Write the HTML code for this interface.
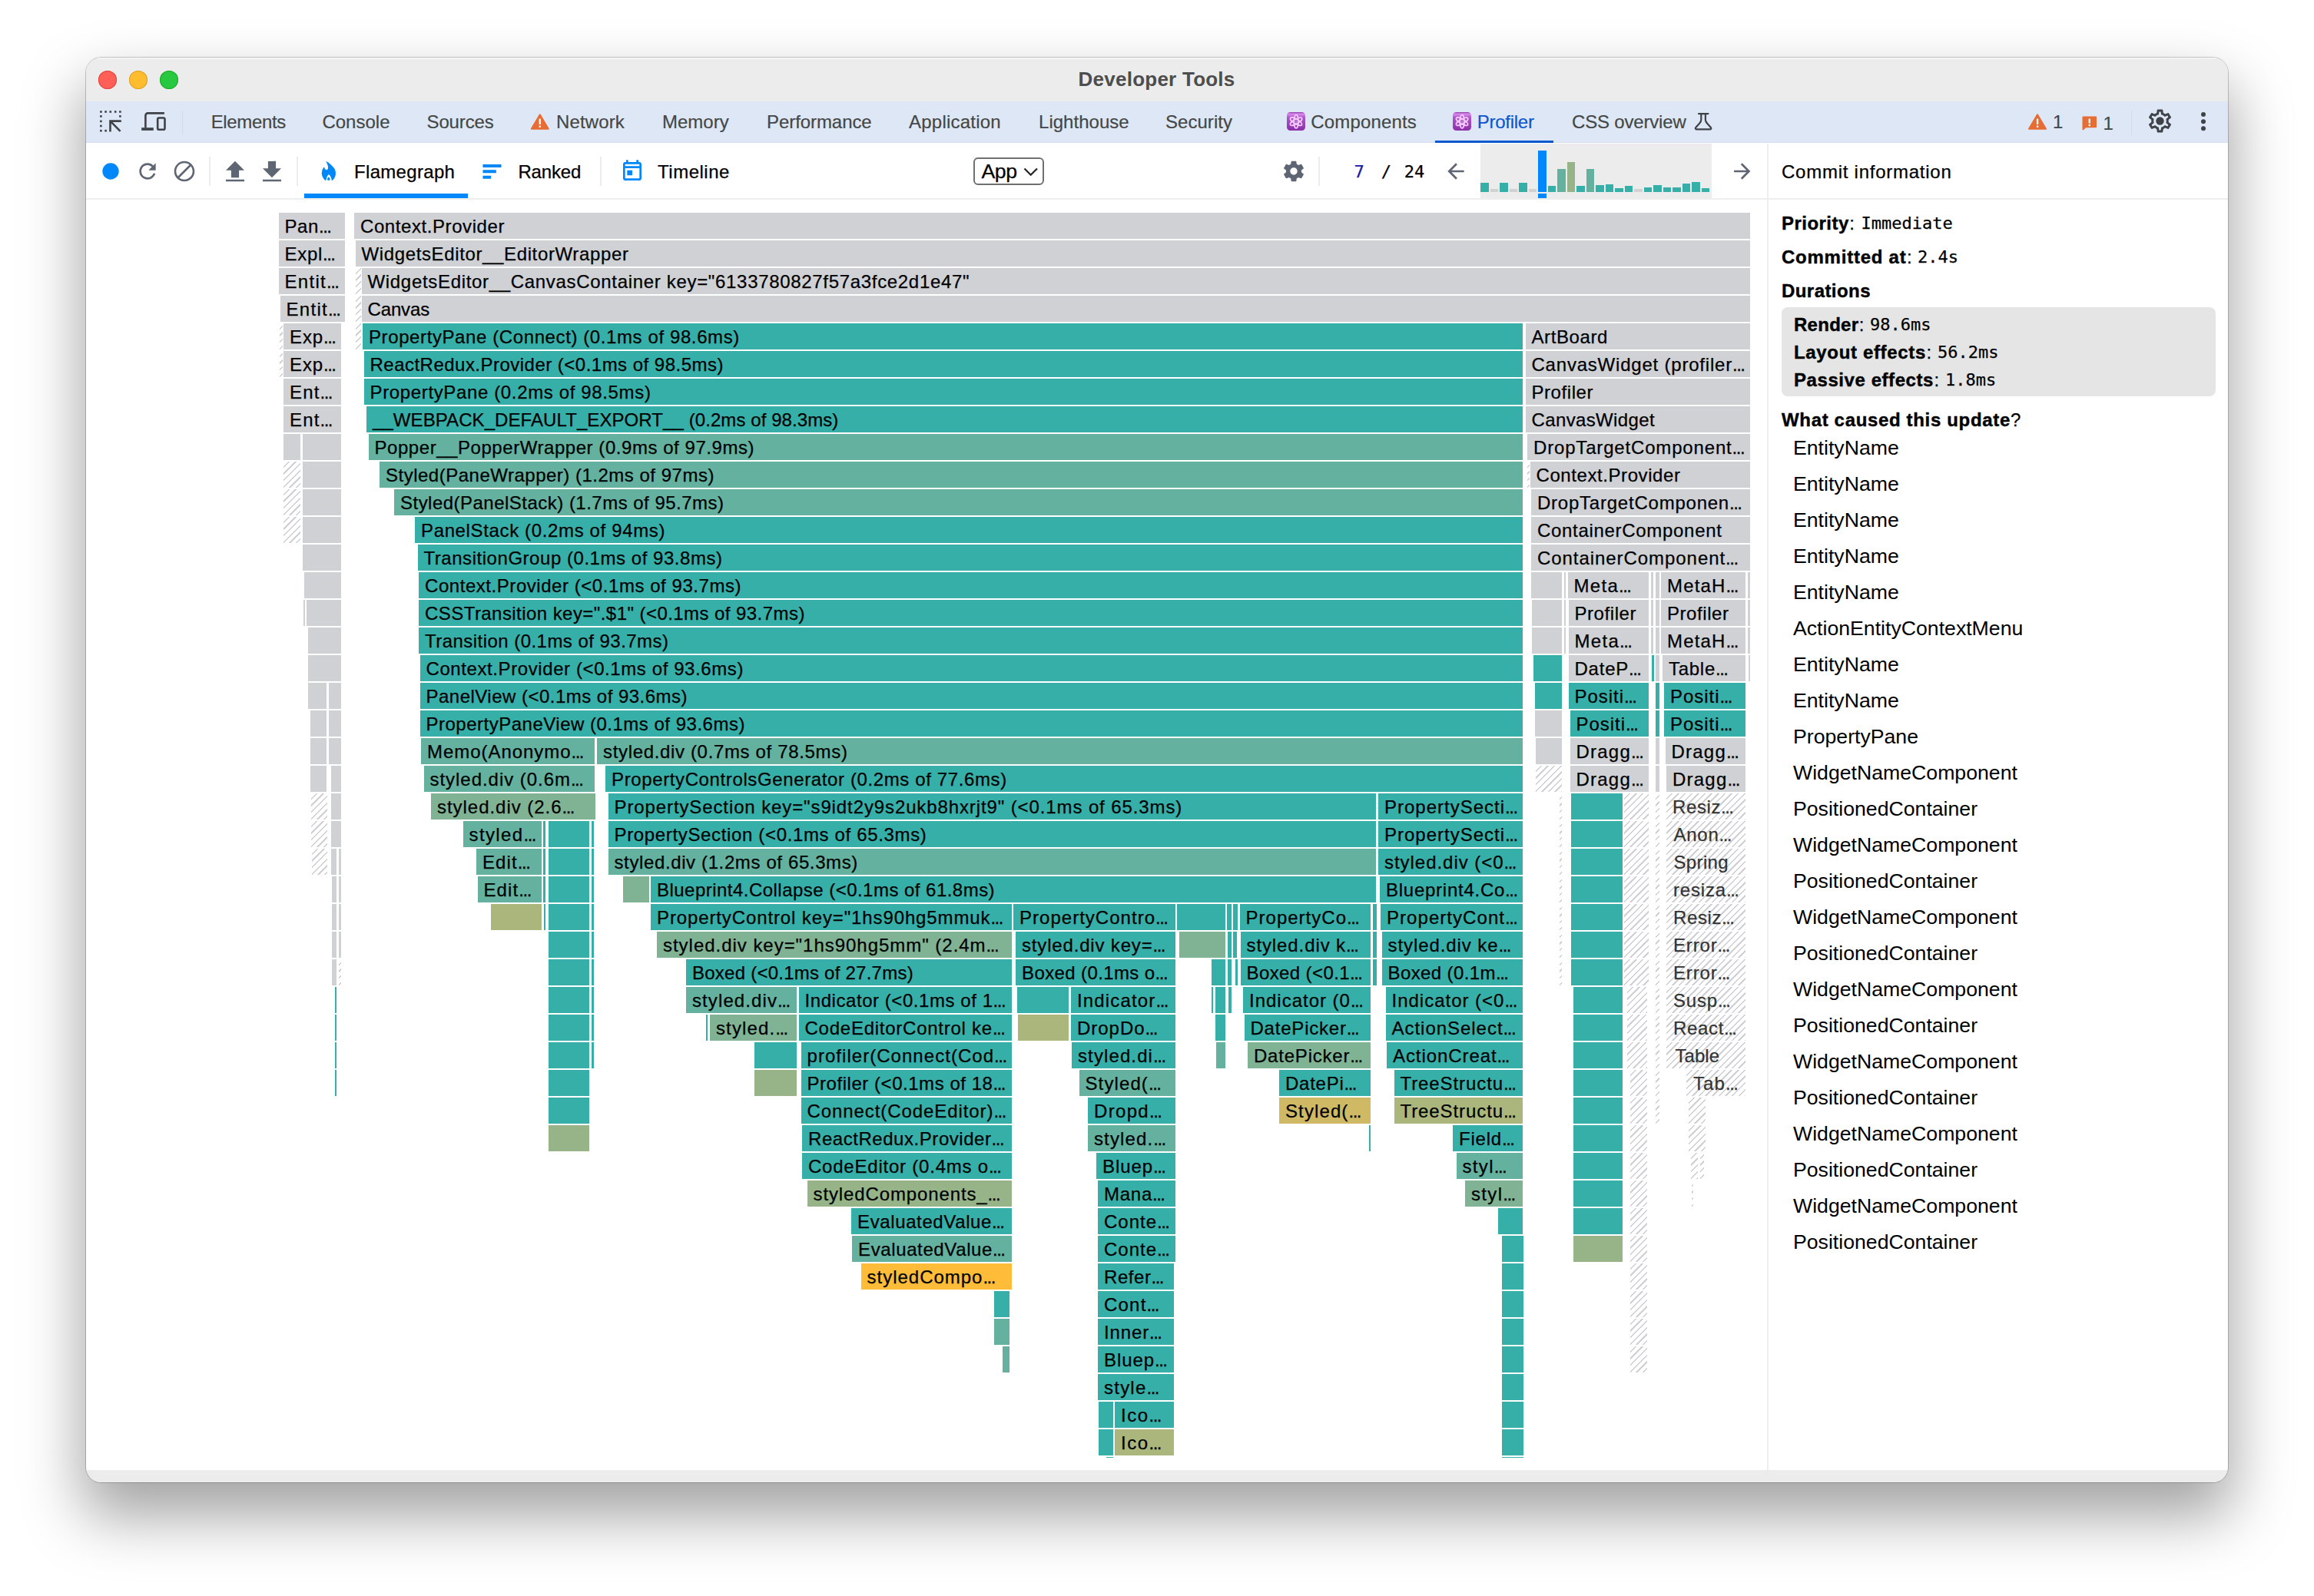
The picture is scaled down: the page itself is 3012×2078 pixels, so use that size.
<!DOCTYPE html>
<html><head><meta charset="utf-8"><title>Developer Tools</title>
<style>*{box-sizing:border-box;margin:0;padding:0}
html,body{width:3012px;height:2078px;background:#fff;overflow:hidden}
body{position:relative;font-family:"Liberation Sans",sans-serif;color:#000}
#win{position:absolute;left:112px;top:75px;width:2788px;height:1855px;border-radius:20px;background:#fff;
 box-shadow:0 0 0 1px rgba(0,0,0,.2),0 40px 78px 4.5px rgba(0,0,0,.36)}
#clip{position:absolute;left:0;top:0;width:2788px;height:1855px;border-radius:20px;overflow:hidden}
#c{position:absolute;left:-112px;top:-75px;width:3012px;height:2078px}
#c div,#c svg{position:absolute}
.title{left:112px;top:75px;width:2788px;height:57px;background:#ececec;box-shadow:inset 0 1.5px 0 rgba(255,255,255,.6)}
.ttl{font:bold 26px/30px "Liberation Sans",sans-serif;color:#4d4d4d;white-space:pre}
.tabs{left:112px;top:132px;width:2788px;height:54px;background:#dee7f6}
.tl{border-radius:50%;width:24px;height:24px;top:91.5px}
.tab{font-size:24px;line-height:30px;color:#444746;white-space:pre}
.sel{color:#0b57d0}
.tt{font-size:24px;line-height:31.4px;color:#000;white-space:pre}
.fg{left:0;top:0;width:3012px;height:1898px;overflow:hidden}
.b{height:34px;font-size:24px;line-height:35px;letter-spacing:0.6px;white-space:pre;overflow:hidden;color:#000;-webkit-text-stroke:0.25px}
.t{padding-left:8px}
.b i{font-style:normal;letter-spacing:-1.5px}
.g{background:#cfd1d5}
.h{background:repeating-linear-gradient(135deg,rgba(0,0,0,0) 0 4.4px,#cfd1d5 4.4px 6.1px);color:#333}
.sep{width:2px;background:#ececec}
.rp{white-space:pre;font-size:24px;line-height:30px}
.bd{font-weight:bold}
.m{font-family:"DejaVu Sans Mono","Liberation Mono",monospace;font-size:22px;white-space:pre}
.li{left:2334px;font-size:26.67px;line-height:32px;white-space:pre}
.tt,.rp,.m{-webkit-text-stroke:0.25px}
.bd{-webkit-text-stroke:0.4px}
.atom{width:24px;height:24px;border-radius:4.6px;background:linear-gradient(180deg,#8d3aa6 0,#d88bee 10%,#ab55c9 30%,#8c2fa9 100%)}
.tab{-webkit-text-stroke:0.2px}
</style></head>
<body>
<div id="win"><div id="clip"><div id="c">
<div class="title"></div>
<div class="tl" style="left:128px;background:#fe5f57;box-shadow:inset 0 0 0 1px #e0443e"></div>
<div class="tl" style="left:168px;background:#febc2e;box-shadow:inset 0 0 0 1px #dea123"></div>
<div class="tl" style="left:208px;background:#28c840;box-shadow:inset 0 0 0 1px #1aab29"></div>
<div class="ttl" style="left:1403.6px;top:88px;letter-spacing:0.24px">Developer Tools</div>
<div class="tabs"></div>
<div class="tab" style="left:274.7px;top:143.5px;letter-spacing:-0.34px">Elements</div>
<div class="tab" style="left:419.4px;top:143.5px;letter-spacing:0.02px">Console</div>
<div class="tab" style="left:555.5px;top:143.5px;letter-spacing:-0.12px">Sources</div>
<div class="tab" style="left:724px;top:143.5px;letter-spacing:0.14px">Network</div>
<div class="tab" style="left:861.9px;top:143.5px;letter-spacing:0.02px">Memory</div>
<div class="tab" style="left:998px;top:143.5px;letter-spacing:-0.07px">Performance</div>
<div class="tab" style="left:1183px;top:143.5px;letter-spacing:0.23px">Application</div>
<div class="tab" style="left:1352px;top:143.5px;letter-spacing:0.03px">Lighthouse</div>
<div class="tab" style="left:1517px;top:143.5px;letter-spacing:0.04px">Security</div>
<div class="tab" style="left:1706.3px;top:143.5px;letter-spacing:0.16px">Components</div>
<div class="tab sel" style="left:1922.8px;top:143.5px;letter-spacing:-0.27px">Profiler</div>
<div class="tab" style="left:2046px;top:143.5px;letter-spacing:-0.18px">CSS overview</div>
<div class="tab" style="left:2672px;top:144.3px">1</div><div class="tab" style="left:2737.5px;top:146.2px">1</div>
<div style="left:236.5px;top:144px;width:1px;height:32px;background:#d2dbec"></div>
<div style="left:2774px;top:144px;width:1px;height:32px;background:#d2dbec"></div>
<div style="left:112px;top:184.5px;width:2788px;height:1.5px;background:#d8dff1"></div>
<div style="left:1868px;top:182.5px;width:154px;height:3.5px;background:#0b57d0"></div>
<div style="left:112px;top:257.5px;width:2788px;height:2px;background:#eeeeee"></div>
<div class="sep" style="left:272px;top:203.5px;height:38px"></div>
<div class="sep" style="left:386px;top:203.5px;height:38px"></div>
<div class="sep" style="left:781px;top:203.5px;height:38px"></div>
<div class="sep" style="left:1716px;top:203.5px;height:38px"></div>
<div class="tt" style="left:461px;top:208px;letter-spacing:0.32px">Flamegraph</div>
<div class="tt" style="left:674.4px;top:208px;letter-spacing:-0.14px">Ranked</div>
<div class="tt" style="left:856px;top:208px;letter-spacing:0.52px">Timeline</div>
<div style="left:396px;top:252px;width:213px;height:6px;background:#0088fa"></div>
<div style="left:1267px;top:204.5px;width:91.5px;height:36.5px;border:2px solid #707070;border-radius:6px;background:#fff"></div>
<div class="tt" style="left:1277.5px;top:207.6px;font-size:26.67px;letter-spacing:-0.48px">App</div>
<div class="m" style="left:1762.5px;top:209px;color:#1a1aa6;line-height:30px">7</div><div class="m" style="left:1797.7px;top:209px;line-height:30px">/</div><div class="m" style="left:1827.7px;top:209px;line-height:30px">24</div>
<div style="left:1927px;top:187px;width:300.5px;height:72px;background:#ececec"></div>
<div style="left:1927.2px;top:238.2px;width:10.8px;height:11.8px;background:#37afa9"></div><div style="left:1939.7px;top:246.4px;width:10.8px;height:3.6px;background:#d1d1d1"></div><div style="left:1952.2px;top:238.2px;width:10.8px;height:11.8px;background:#37afa9"></div><div style="left:1964.7px;top:246.4px;width:10.8px;height:3.6px;background:#d1d1d1"></div><div style="left:1977.2px;top:238.2px;width:10.8px;height:11.8px;background:#37afa9"></div><div style="left:1989.7px;top:246.4px;width:10.8px;height:3.6px;background:#d1d1d1"></div><div style="left:2002.2px;top:196.0px;width:10.8px;height:54px;background:#0088fa"></div><div style="left:2014.7px;top:242.2px;width:10.8px;height:7.8px;background:#37afa9"></div><div style="left:2027.2px;top:220.4px;width:10.8px;height:29.6px;background:#63b19e"></div><div style="left:2039.7px;top:211.3px;width:10.8px;height:38.7px;background:#97b488"></div><div style="left:2052.2px;top:242.2px;width:10.8px;height:7.8px;background:#37afa9"></div><div style="left:2064.7px;top:220.4px;width:10.8px;height:29.6px;background:#63b19e"></div><div style="left:2077.2px;top:241.3px;width:10.8px;height:8.7px;background:#37afa9"></div><div style="left:2089.7px;top:240.0px;width:10.8px;height:10px;background:#37afa9"></div><div style="left:2102.2px;top:245.1px;width:10.8px;height:4.9px;background:#37afa9"></div><div style="left:2114.7px;top:242.2px;width:10.8px;height:7.8px;background:#37afa9"></div><div style="left:2127.2px;top:246.4px;width:10.8px;height:3.6px;background:#d1d1d1"></div><div style="left:2139.7px;top:244.0px;width:10.8px;height:6px;background:#37afa9"></div><div style="left:2152.2px;top:241.3px;width:10.8px;height:8.7px;background:#37afa9"></div><div style="left:2164.7px;top:244.0px;width:10.8px;height:6px;background:#37afa9"></div><div style="left:2177.2px;top:244.0px;width:10.8px;height:6px;background:#37afa9"></div><div style="left:2189.7px;top:239.1px;width:10.8px;height:10.9px;background:#37afa9"></div><div style="left:2202.2px;top:237.3px;width:10.8px;height:12.7px;background:#37afa9"></div><div style="left:2214.7px;top:245.1px;width:10.8px;height:4.9px;background:#37afa9"></div><div style="left:2002.2px;top:252.2px;width:10.8px;height:5.6px;background:#0088fa"></div>
<div class="fg">
<div class="b g t" style="left:362.5px;top:277px;width:86.5px;letter-spacing:0.60px;">Pan<i>...</i></div><div class="b g t" style="left:461px;top:277px;width:1817px;letter-spacing:0.58px;">Context.Provider</div>
<div class="b g t" style="left:362.5px;top:313px;width:86.5px;letter-spacing:0.70px;">Expl<i>...</i></div><div class="b g t" style="left:462.5px;top:313px;width:1815.5px;letter-spacing:0.63px;">WidgetsEditor__EditorWrapper</div>
<div class="b g t" style="left:362.5px;top:349px;width:86.5px;letter-spacing:1.29px;">Entit<i>...</i></div><div class="b h" style="left:463px;top:349px;width:6.5px;"></div><div class="b g t" style="left:470.5px;top:349px;width:1807.5px;letter-spacing:0.68px;">WidgetsEditor__CanvasContainer key="6133780827f57a3fce2d1e47"</div>
<div class="b g t" style="left:364.5px;top:385px;width:84.5px;letter-spacing:1.29px;">Entit<i>...</i></div><div class="b h" style="left:463px;top:385px;width:6.5px;"></div><div class="b g t" style="left:470.5px;top:385px;width:1807.5px;letter-spacing:-0.15px;">Canvas</div>
<div class="b h" style="left:364px;top:421px;width:3.5px;"></div><div class="b g t" style="left:369px;top:421px;width:75px;letter-spacing:0.88px;">Exp<i>...</i></div><div class="b h" style="left:463px;top:421px;width:6.5px;"></div><div class="b t" style="left:472px;top:421px;width:1510px;background:#37afa9;letter-spacing:0.60px;">PropertyPane (Connect) (0.1ms of 98.6ms)</div><div class="b g t" style="left:1985.5px;top:421px;width:292.5px;letter-spacing:0.60px;">ArtBoard</div>
<div class="b h" style="left:364px;top:457px;width:3.5px;"></div><div class="b g t" style="left:369px;top:457px;width:75px;letter-spacing:0.88px;">Exp<i>...</i></div><div class="b t" style="left:473.5px;top:457px;width:1508.5px;background:#37afa9;letter-spacing:0.48px;">ReactRedux.Provider (&lt;0.1ms of 98.5ms)</div><div class="b g t" style="left:1985.5px;top:457px;width:292.5px;letter-spacing:0.79px;">CanvasWidget (profiler<i>...</i></div>
<div class="b g t" style="left:369px;top:493px;width:75px;letter-spacing:1.16px;">Ent<i>...</i></div><div class="b t" style="left:473.5px;top:493px;width:1508.5px;background:#37afa9;letter-spacing:0.64px;">PropertyPane (0.2ms of 98.5ms)</div><div class="b g t" style="left:1985.5px;top:493px;width:292.5px;letter-spacing:0.56px;">Profiler</div>
<div class="b g t" style="left:369px;top:529px;width:75px;letter-spacing:1.16px;">Ent<i>...</i></div><div class="b t" style="left:477px;top:529px;width:1505px;background:#37afa9;letter-spacing:0.08px;">__WEBPACK_DEFAULT_EXPORT__ (0.2ms of 98.3ms)</div><div class="b g t" style="left:1985.5px;top:529px;width:292.5px;letter-spacing:0.37px;">CanvasWidget</div>
<div class="b g" style="left:369px;top:565px;width:22px;"></div><div class="b g" style="left:394px;top:565px;width:50px;"></div><div class="b t" style="left:479.5px;top:565px;width:1502.5px;background:#63b19e;letter-spacing:0.55px;">Popper__PopperWrapper (0.9ms of 97.9ms)</div><div class="b g t" style="left:1988px;top:565px;width:290px;letter-spacing:0.83px;">DropTargetComponent<i>...</i></div>
<div class="b h" style="left:369px;top:601px;width:22px;"></div><div class="b g" style="left:394px;top:601px;width:50px;"></div><div class="b t" style="left:494px;top:601px;width:1488px;background:#63b19e;letter-spacing:0.50px;">Styled(PaneWrapper) (1.2ms of 97ms)</div><div class="b h" style="left:1988px;top:601px;width:2.5px;"></div><div class="b g t" style="left:1991.5px;top:601px;width:286.5px;letter-spacing:0.58px;">Context.Provider</div>
<div class="b h" style="left:369px;top:637px;width:22px;"></div><div class="b g" style="left:394px;top:637px;width:50px;"></div><div class="b t" style="left:513px;top:637px;width:1469px;background:#63b19e;letter-spacing:0.48px;">Styled(PanelStack) (1.7ms of 95.7ms)</div><div class="b g t" style="left:1993px;top:637px;width:285px;letter-spacing:0.77px;">DropTargetComponen<i>...</i></div>
<div class="b h" style="left:369px;top:673px;width:22px;"></div><div class="b g" style="left:394px;top:673px;width:50px;"></div><div class="b t" style="left:540px;top:673px;width:1442px;background:#37afa9;letter-spacing:0.64px;">PanelStack (0.2ms of 94ms)</div><div class="b g t" style="left:1993px;top:673px;width:285px;letter-spacing:0.69px;">ContainerComponent</div>
<div class="b g" style="left:394px;top:709px;width:50px;"></div><div class="b t" style="left:543.5px;top:709px;width:1438.5px;background:#37afa9;letter-spacing:0.54px;">TransitionGroup (0.1ms of 93.8ms)</div><div class="b g t" style="left:1993px;top:709px;width:285px;letter-spacing:0.94px;">ContainerComponent<i>...</i></div>
<div class="b g" style="left:396px;top:745px;width:48px;"></div><div class="b t" style="left:545px;top:745px;width:1437px;background:#37afa9;letter-spacing:0.55px;">Context.Provider (&lt;0.1ms of 93.7ms)</div><div class="b g" style="left:1993px;top:745px;width:40px;"></div><div class="b g" style="left:2036px;top:745px;width:2px;"></div><div class="b g t" style="left:2040.5px;top:745px;width:105.5px;letter-spacing:1.29px;">Meta<i>...</i></div><div class="b g" style="left:2149px;top:745px;width:2.5px;"></div><div class="b g" style="left:2155px;top:745px;width:5px;"></div><div class="b g t" style="left:2162px;top:745px;width:110px;letter-spacing:1.16px;">MetaH<i>...</i></div><div class="b g" style="left:2274.5px;top:745px;width:3.5px;"></div>
<div class="b g" style="left:395px;top:781px;width:2px;"></div><div class="b g" style="left:399px;top:781px;width:45px;"></div><div class="b t" style="left:545px;top:781px;width:1437px;background:#37afa9;letter-spacing:0.44px;">CSSTransition key=".$1" (&lt;0.1ms of 93.7ms)</div><div class="b g" style="left:1994px;top:781px;width:39px;"></div><div class="b g" style="left:2036px;top:781px;width:2px;"></div><div class="b g t" style="left:2041.5px;top:781px;width:104.5px;letter-spacing:0.56px;">Profiler</div><div class="b g" style="left:2149px;top:781px;width:2.5px;"></div><div class="b g" style="left:2155px;top:781px;width:5px;"></div><div class="b g t" style="left:2162px;top:781px;width:110px;letter-spacing:0.56px;">Profiler</div><div class="b g" style="left:2275px;top:781px;width:3px;"></div>
<div class="b g" style="left:401px;top:817px;width:43px;"></div><div class="b t" style="left:545px;top:817px;width:1437px;background:#37afa9;letter-spacing:0.46px;">Transition (0.1ms of 93.7ms)</div><div class="b g" style="left:1994px;top:817px;width:39px;"></div><div class="b g" style="left:2036px;top:817px;width:2px;"></div><div class="b g t" style="left:2041.5px;top:817px;width:104.5px;letter-spacing:1.29px;">Meta<i>...</i></div><div class="b g" style="left:2149px;top:817px;width:2.5px;"></div><div class="b g" style="left:2155px;top:817px;width:5px;"></div><div class="b g t" style="left:2162px;top:817px;width:110px;letter-spacing:1.16px;">MetaH<i>...</i></div><div class="b g" style="left:2275px;top:817px;width:3px;"></div>
<div class="b g" style="left:401px;top:853px;width:43px;"></div><div class="b t" style="left:546.5px;top:853px;width:1435.5px;background:#37afa9;letter-spacing:0.59px;">Context.Provider (&lt;0.1ms of 93.6ms)</div><div class="b" style="left:1996px;top:853px;width:37px;background:#37afa9;"></div><div class="b g t" style="left:2041.5px;top:853px;width:104.5px;letter-spacing:0.76px;">DateP<i>...</i></div><div class="b" style="left:2150px;top:853px;width:2.5px;background:#37afa9;"></div><div class="b g" style="left:2155px;top:853px;width:5px;"></div><div class="b g t" style="left:2164px;top:853px;width:108px;letter-spacing:0.72px;">Table<i>...</i></div><div class="b g" style="left:2276px;top:853px;width:2px;"></div>
<div class="b g" style="left:401px;top:889px;width:24px;"></div><div class="b g" style="left:428px;top:889px;width:16px;"></div><div class="b t" style="left:546.5px;top:889px;width:1435.5px;background:#37afa9;letter-spacing:0.48px;">PanelView (&lt;0.1ms of 93.6ms)</div><div class="b" style="left:1997.5px;top:889px;width:35.5px;background:#37afa9;"></div><div class="b t" style="left:2041.5px;top:889px;width:104.5px;background:#37afa9;letter-spacing:0.97px;">Positi<i>...</i></div><div class="b" style="left:2155px;top:889px;width:5px;background:#37afa9;"></div><div class="b t" style="left:2166px;top:889px;width:106px;background:#37afa9;letter-spacing:0.97px;">Positi<i>...</i></div>
<div class="b g" style="left:404px;top:925px;width:21px;"></div><div class="b g" style="left:428px;top:925px;width:16px;"></div><div class="b t" style="left:546.5px;top:925px;width:1435.5px;background:#37afa9;letter-spacing:0.50px;">PropertyPaneView (0.1ms of 93.6ms)</div><div class="b g" style="left:1997.5px;top:925px;width:35.5px;"></div><div class="b t" style="left:2043.5px;top:925px;width:102.5px;background:#37afa9;letter-spacing:0.97px;">Positi<i>...</i></div><div class="b" style="left:2155px;top:925px;width:5px;background:#37afa9;"></div><div class="b t" style="left:2166px;top:925px;width:106px;background:#37afa9;letter-spacing:0.97px;">Positi<i>...</i></div>
<div class="b g" style="left:404px;top:961px;width:21px;"></div><div class="b g" style="left:428px;top:961px;width:16px;"></div><div class="b t" style="left:548px;top:961px;width:226px;background:#63b19e;letter-spacing:0.95px;">Memo(Anonymo<i>...</i></div><div class="b t" style="left:777px;top:961px;width:1205px;background:#63b19e;letter-spacing:0.66px;">styled.div (0.7ms of 78.5ms)</div><div class="b g" style="left:1999px;top:961px;width:34px;"></div><div class="b g t" style="left:2043.5px;top:961px;width:102.5px;letter-spacing:1.23px;">Dragg<i>...</i></div><div class="b g" style="left:2155px;top:961px;width:5px;"></div><div class="b g t" style="left:2167.5px;top:961px;width:104.5px;letter-spacing:1.23px;">Dragg<i>...</i></div>
<div class="b g" style="left:404px;top:997px;width:21px;"></div><div class="b g" style="left:431px;top:997px;width:13px;"></div><div class="b t" style="left:551.5px;top:997px;width:222.5px;background:#63b19e;letter-spacing:0.96px;">styled.div (0.6m<i>...</i></div><div class="b t" style="left:788px;top:997px;width:1194px;background:#37afa9;letter-spacing:0.62px;">PropertyControlsGenerator (0.2ms of 77.6ms)</div><div class="b h" style="left:1999px;top:997px;width:34px;"></div><div class="b g t" style="left:2043.5px;top:997px;width:102.5px;letter-spacing:1.23px;">Dragg<i>...</i></div><div class="b g" style="left:2155px;top:997px;width:5px;"></div><div class="b g t" style="left:2169px;top:997px;width:103px;letter-spacing:1.23px;">Dragg<i>...</i></div>
<div class="b h" style="left:405px;top:1033px;width:21px;"></div><div class="b g" style="left:431px;top:1033px;width:13px;"></div><div class="b t" style="left:561px;top:1033px;width:214px;background:#80b393;letter-spacing:0.96px;">styled.div (2.6<i>...</i></div><div class="b t" style="left:791.5px;top:1033px;width:999.5px;background:#37afa9;letter-spacing:0.89px;">PropertySection key="s9idt2y9s2ukb8hxrjt9" (&lt;0.1ms of 65.3ms)</div><div class="b t" style="left:1794px;top:1033px;width:188px;background:#37afa9;letter-spacing:1.00px;">PropertySecti<i>...</i></div><div class="b h" style="left:2030px;top:1033px;width:3px;"></div><div class="b" style="left:2045px;top:1033px;width:66.5px;background:#37afa9;"></div><div class="b h" style="left:2113.5px;top:1033px;width:32.5px;"></div><div class="b h" style="left:2155px;top:1033px;width:5px;"></div><div class="b h t" style="left:2169px;top:1033px;width:103px;letter-spacing:0.60px;">Resiz<i>...</i></div>
<div class="b h" style="left:405px;top:1069px;width:21px;"></div><div class="b g" style="left:431px;top:1069px;width:13px;"></div><div class="b t" style="left:602.5px;top:1069px;width:102.5px;background:#63b19e;letter-spacing:1.38px;">styled<i>...</i></div><div class="b" style="left:707px;top:1069px;width:2.5px;background:#37afa9;"></div><div class="b" style="left:714px;top:1069px;width:53px;background:#37afa9;"></div><div class="b" style="left:769.5px;top:1069px;width:3.5px;background:#37afa9;"></div><div class="b t" style="left:791.5px;top:1069px;width:999.5px;background:#37afa9;letter-spacing:0.65px;">PropertySection (&lt;0.1ms of 65.3ms)</div><div class="b t" style="left:1794px;top:1069px;width:188px;background:#37afa9;letter-spacing:1.00px;">PropertySecti<i>...</i></div><div class="b h" style="left:2030px;top:1069px;width:3px;"></div><div class="b" style="left:2045px;top:1069px;width:66.5px;background:#37afa9;"></div><div class="b h" style="left:2113.5px;top:1069px;width:32.5px;"></div><div class="b h" style="left:2155px;top:1069px;width:5px;"></div><div class="b h t" style="left:2169px;top:1069px;width:103px;padding-left:9.5px;letter-spacing:0.73px;">Anon<i>...</i></div>
<div class="b h" style="left:406px;top:1105px;width:20px;"></div><div class="b g" style="left:431px;top:1105px;width:7px;"></div><div class="b g" style="left:441px;top:1105px;width:3px;"></div><div class="b t" style="left:620px;top:1105px;width:85px;background:#63b19e;letter-spacing:1.11px;">Edit<i>...</i></div><div class="b" style="left:707px;top:1105px;width:2.5px;background:#37afa9;"></div><div class="b" style="left:714px;top:1105px;width:53px;background:#37afa9;"></div><div class="b" style="left:769.5px;top:1105px;width:3.5px;background:#37afa9;"></div><div class="b t" style="left:791.5px;top:1105px;width:999.5px;background:#63b19e;letter-spacing:0.62px;">styled.div (1.2ms of 65.3ms)</div><div class="b t" style="left:1794px;top:1105px;width:188px;background:#37afa9;letter-spacing:0.96px;">styled.div (&lt;0<i>...</i></div><div class="b h" style="left:2030px;top:1105px;width:3px;"></div><div class="b" style="left:2045px;top:1105px;width:66.5px;background:#37afa9;"></div><div class="b h" style="left:2113.5px;top:1105px;width:32.5px;"></div><div class="b h" style="left:2155px;top:1105px;width:5px;"></div><div class="b h t" style="left:2169px;top:1105px;width:103px;padding-left:9.5px;letter-spacing:0.35px;">Spring</div>
<div class="b g" style="left:432px;top:1141px;width:6px;"></div><div class="b g" style="left:441px;top:1141px;width:3px;"></div><div class="b t" style="left:621.5px;top:1141px;width:83.5px;background:#63b19e;letter-spacing:1.11px;">Edit<i>...</i></div><div class="b" style="left:707px;top:1141px;width:2.5px;background:#37afa9;"></div><div class="b" style="left:714px;top:1141px;width:53px;background:#37afa9;"></div><div class="b" style="left:769.5px;top:1141px;width:3.5px;background:#37afa9;"></div><div class="b" style="left:810.5px;top:1141px;width:34.5px;background:#80b393;"></div><div class="b t" style="left:847px;top:1141px;width:944px;background:#37afa9;letter-spacing:0.47px;">Blueprint4.Collapse (&lt;0.1ms of 61.8ms)</div><div class="b t" style="left:1796px;top:1141px;width:186px;background:#37afa9;letter-spacing:0.74px;">Blueprint4.Co<i>...</i></div><div class="b h" style="left:2030px;top:1141px;width:3px;"></div><div class="b" style="left:2045px;top:1141px;width:66.5px;background:#37afa9;"></div><div class="b h" style="left:2113.5px;top:1141px;width:32.5px;"></div><div class="b h" style="left:2155px;top:1141px;width:5px;"></div><div class="b h t" style="left:2169px;top:1141px;width:103px;padding-left:9px;letter-spacing:0.83px;">resiza<i>...</i></div>
<div class="b g" style="left:432px;top:1177px;width:6px;"></div><div class="b g" style="left:441px;top:1177px;width:3px;"></div><div class="b" style="left:639px;top:1177px;width:66px;background:#abb67d;"></div><div class="b" style="left:707.5px;top:1177px;width:2.5px;background:#37afa9;"></div><div class="b" style="left:714px;top:1177px;width:53px;background:#37afa9;"></div><div class="b" style="left:769.5px;top:1177px;width:3.5px;background:#37afa9;"></div><div class="b t" style="left:847px;top:1177px;width:469.5px;background:#37afa9;letter-spacing:0.88px;">PropertyControl key="1hs90hg5mmuk<i>...</i></div><div class="b t" style="left:1319px;top:1177px;width:210.5px;background:#37afa9;letter-spacing:1.02px;">PropertyContro<i>...</i></div><div class="b" style="left:1532px;top:1177px;width:62.5px;background:#37afa9;"></div><div class="b" style="left:1597px;top:1177px;width:5.5px;background:#37afa9;"></div><div class="b" style="left:1605px;top:1177px;width:6px;background:#37afa9;"></div><div class="b t" style="left:1613.5px;top:1177px;width:170.0px;background:#37afa9;letter-spacing:1.01px;">PropertyCo<i>...</i></div><div class="b" style="left:1786.5px;top:1177px;width:5.0px;background:#37afa9;"></div><div class="b t" style="left:1797px;top:1177px;width:185px;background:#37afa9;letter-spacing:1.05px;">PropertyCont<i>...</i></div><div class="b h" style="left:2030px;top:1177px;width:3px;"></div><div class="b" style="left:2045px;top:1177px;width:66.5px;background:#37afa9;"></div><div class="b h" style="left:2113.5px;top:1177px;width:32.5px;"></div><div class="b h" style="left:2155px;top:1177px;width:5px;"></div><div class="b h t" style="left:2169px;top:1177px;width:103px;padding-left:9px;letter-spacing:0.60px;">Resiz<i>...</i></div>
<div class="b g" style="left:432px;top:1213px;width:6px;"></div><div class="b g" style="left:441px;top:1213px;width:3px;"></div><div class="b" style="left:714px;top:1213px;width:53px;background:#37afa9;"></div><div class="b" style="left:769.5px;top:1213px;width:3.5px;background:#37afa9;"></div><div class="b t" style="left:855px;top:1213px;width:461.5px;background:#80b393;letter-spacing:0.97px;">styled.div key="1hs90hg5mm" (2.4m<i>...</i></div><div class="b t" style="left:1322px;top:1213px;width:207.5px;background:#37afa9;letter-spacing:0.83px;">styled.div key=<i>...</i></div><div class="b" style="left:1535px;top:1213px;width:59.5px;background:#80b393;"></div><div class="b" style="left:1597.5px;top:1213px;width:5.0px;background:#37afa9;"></div><div class="b" style="left:1605px;top:1213px;width:5px;background:#37afa9;"></div><div class="b t" style="left:1614.5px;top:1213px;width:169.0px;background:#37afa9;letter-spacing:0.90px;">styled.div k<i>...</i></div><div class="b" style="left:1786.5px;top:1213px;width:5.0px;background:#37afa9;"></div><div class="b t" style="left:1798.5px;top:1213px;width:183.5px;background:#37afa9;letter-spacing:0.92px;">styled.div ke<i>...</i></div><div class="b h" style="left:2030px;top:1213px;width:3px;"></div><div class="b" style="left:2045px;top:1213px;width:66.5px;background:#37afa9;"></div><div class="b h" style="left:2113.5px;top:1213px;width:32.5px;"></div><div class="b h" style="left:2155px;top:1213px;width:5px;"></div><div class="b h t" style="left:2169px;top:1213px;width:103px;padding-left:9px;letter-spacing:0.83px;">Error<i>...</i></div>
<div class="b g" style="left:432px;top:1249px;width:6px;"></div><div class="b h" style="left:441px;top:1249px;width:3px;"></div><div class="b" style="left:714px;top:1249px;width:53px;background:#37afa9;"></div><div class="b" style="left:769.5px;top:1249px;width:3.5px;background:#37afa9;"></div><div class="b t" style="left:893px;top:1249px;width:423.5px;background:#37afa9;letter-spacing:0.24px;">Boxed (&lt;0.1ms of 27.7ms)</div><div class="b t" style="left:1322px;top:1249px;width:207.5px;background:#37afa9;letter-spacing:0.39px;">Boxed (0.1ms o<i>...</i></div><div class="b" style="left:1576.5px;top:1249px;width:18.0px;background:#37afa9;"></div><div class="b" style="left:1598px;top:1249px;width:4.5px;background:#37afa9;"></div><div class="b" style="left:1607.5px;top:1249px;width:3.0px;background:#37afa9;"></div><div class="b t" style="left:1614.5px;top:1249px;width:169.0px;background:#37afa9;letter-spacing:0.40px;">Boxed (&lt;0.1<i>...</i></div><div class="b" style="left:1786.5px;top:1249px;width:5.0px;background:#37afa9;"></div><div class="b t" style="left:1798.5px;top:1249px;width:183.5px;background:#37afa9;letter-spacing:0.40px;">Boxed (0.1m<i>...</i></div><div class="b h" style="left:2030px;top:1249px;width:3px;"></div><div class="b" style="left:2045px;top:1249px;width:66.5px;background:#37afa9;"></div><div class="b h" style="left:2113.5px;top:1249px;width:32.5px;"></div><div class="b h" style="left:2155px;top:1249px;width:5px;"></div><div class="b h t" style="left:2169px;top:1249px;width:103px;padding-left:9px;letter-spacing:0.83px;">Error<i>...</i></div>
<div class="b" style="left:435.5px;top:1285px;width:2.0px;background:#37afa9;"></div><div class="b" style="left:714px;top:1285px;width:53px;background:#37afa9;"></div><div class="b" style="left:769.5px;top:1285px;width:3.5px;background:#37afa9;"></div><div class="b t" style="left:893px;top:1285px;width:143.5px;background:#63b19e;letter-spacing:1.10px;">styled.div<i>...</i></div><div class="b t" style="left:1039.5px;top:1285px;width:277.0px;background:#37afa9;letter-spacing:0.56px;">Indicator (&lt;0.1ms of 1<i>...</i></div><div class="b" style="left:1324px;top:1285px;width:67px;background:#37afa9;"></div><div class="b t" style="left:1394px;top:1285px;width:135.5px;background:#37afa9;letter-spacing:1.16px;">Indicator<i>...</i></div><div class="b" style="left:1576.5px;top:1285px;width:2.5px;background:#37afa9;"></div><div class="b" style="left:1581.5px;top:1285px;width:13.0px;background:#37afa9;"></div><div class="b" style="left:1598.5px;top:1285px;width:4.0px;background:#37afa9;"></div><div class="b t" style="left:1618px;top:1285px;width:165.5px;background:#37afa9;letter-spacing:0.99px;">Indicator (0<i>...</i></div><div class="b t" style="left:1803.5px;top:1285px;width:178.5px;background:#37afa9;letter-spacing:0.99px;">Indicator (&lt;0<i>...</i></div><div class="b" style="left:2048px;top:1285px;width:63.5px;background:#37afa9;"></div><div class="b h" style="left:2118px;top:1285px;width:25.5px;"></div><div class="b h" style="left:2155px;top:1285px;width:5px;"></div><div class="b h t" style="left:2169px;top:1285px;width:103px;padding-left:9px;letter-spacing:0.82px;">Susp<i>...</i></div>
<div class="b" style="left:435.5px;top:1321px;width:2.0px;background:#37afa9;"></div><div class="b" style="left:714px;top:1321px;width:53px;background:#37afa9;"></div><div class="b" style="left:769.5px;top:1321px;width:3.5px;background:#37afa9;"></div><div class="b" style="left:918.5px;top:1321px;width:2.5px;background:#37afa9;"></div><div class="b t" style="left:924px;top:1321px;width:112.5px;background:#80b393;letter-spacing:1.12px;">styled.<i>...</i></div><div class="b t" style="left:1039.5px;top:1321px;width:277.0px;background:#37afa9;letter-spacing:0.75px;">CodeEditorControl ke<i>...</i></div><div class="b" style="left:1325px;top:1321px;width:66px;background:#abb67d;"></div><div class="b t" style="left:1394px;top:1321px;width:135.5px;background:#37afa9;letter-spacing:0.97px;">DropDo<i>...</i></div><div class="b" style="left:1581.5px;top:1321px;width:13.0px;background:#37afa9;"></div><div class="b t" style="left:1619.5px;top:1321px;width:164.0px;background:#37afa9;letter-spacing:0.79px;">DatePicker<i>...</i></div><div class="b t" style="left:1803.5px;top:1321px;width:178.5px;background:#37afa9;letter-spacing:0.97px;">ActionSelect<i>...</i></div><div class="b" style="left:2048px;top:1321px;width:63.5px;background:#37afa9;"></div><div class="b h" style="left:2118px;top:1321px;width:25.5px;"></div><div class="b h" style="left:2155px;top:1321px;width:5px;"></div><div class="b h t" style="left:2169px;top:1321px;width:103px;padding-left:9px;letter-spacing:0.66px;">React<i>...</i></div>
<div class="b" style="left:435.5px;top:1357px;width:2.0px;background:#37afa9;"></div><div class="b" style="left:714px;top:1357px;width:53px;background:#37afa9;"></div><div class="b" style="left:769.5px;top:1357px;width:3.5px;background:#37afa9;"></div><div class="b" style="left:982px;top:1357px;width:54.5px;background:#37afa9;"></div><div class="b t" style="left:1042.5px;top:1357px;width:274.0px;background:#37afa9;letter-spacing:1.04px;">profiler(Connect(Cod<i>...</i></div><div class="b t" style="left:1395px;top:1357px;width:134.5px;background:#37afa9;letter-spacing:1.11px;">styled.di<i>...</i></div><div class="b" style="left:1583px;top:1357px;width:11.5px;background:#63b19e;"></div><div class="b t" style="left:1624px;top:1357px;width:159.5px;background:#80b393;letter-spacing:0.79px;">DatePicker<i>...</i></div><div class="b t" style="left:1805px;top:1357px;width:177px;background:#37afa9;letter-spacing:0.92px;">ActionCreat<i>...</i></div><div class="b" style="left:2048px;top:1357px;width:63.5px;background:#37afa9;"></div><div class="b h" style="left:2118px;top:1357px;width:25.5px;"></div><div class="b h" style="left:2155px;top:1357px;width:5px;"></div><div class="b h t" style="left:2169px;top:1357px;width:103px;padding-left:11.5px;letter-spacing:0.03px;">Table</div>
<div class="b" style="left:435.5px;top:1393px;width:2.0px;background:#37afa9;"></div><div class="b" style="left:714px;top:1393px;width:53px;background:#37afa9;"></div><div class="b" style="left:982px;top:1393px;width:54.5px;background:#97b488;"></div><div class="b t" style="left:1042.5px;top:1393px;width:274.0px;background:#37afa9;letter-spacing:0.54px;">Profiler (&lt;0.1ms of 18<i>...</i></div><div class="b t" style="left:1404.5px;top:1393px;width:125.0px;background:#63b19e;letter-spacing:1.11px;">Styled(<i>...</i></div><div class="b t" style="left:1665px;top:1393px;width:118.5px;background:#37afa9;letter-spacing:0.74px;">DatePi<i>...</i></div><div class="b t" style="left:1814.5px;top:1393px;width:167.5px;background:#37afa9;letter-spacing:0.91px;">TreeStructu<i>...</i></div><div class="b" style="left:2048px;top:1393px;width:63.5px;background:#37afa9;"></div><div class="b h" style="left:2121.5px;top:1393px;width:22.0px;"></div><div class="b h" style="left:2155px;top:1393px;width:5px;"></div><div class="b h t" style="left:2195px;top:1393px;width:77px;padding-left:9px;letter-spacing:1.10px;">Tab<i>...</i></div>
<div class="b" style="left:714px;top:1429px;width:53px;background:#37afa9;"></div><div class="b t" style="left:1042.5px;top:1429px;width:274.0px;background:#37afa9;letter-spacing:0.92px;">Connect(CodeEditor)<i>...</i></div><div class="b t" style="left:1416px;top:1429px;width:113.5px;background:#37afa9;letter-spacing:1.32px;">Dropd<i>...</i></div><div class="b t" style="left:1665px;top:1429px;width:118.5px;background:#cfb965;letter-spacing:1.11px;">Styled(<i>...</i></div><div class="b t" style="left:1814.5px;top:1429px;width:167.5px;background:#abb67d;letter-spacing:0.91px;">TreeStructu<i>...</i></div><div class="b" style="left:2048px;top:1429px;width:63.5px;background:#37afa9;"></div><div class="b h" style="left:2121.5px;top:1429px;width:22.0px;"></div><div class="b h" style="left:2155px;top:1429px;width:5px;"></div><div class="b h" style="left:2197.5px;top:1429px;width:22.5px;"></div>
<div class="b" style="left:714px;top:1465px;width:53px;background:#97b488;"></div><div class="b t" style="left:1044px;top:1465px;width:272.5px;background:#37afa9;letter-spacing:0.55px;">ReactRedux.Provider<i>...</i></div><div class="b t" style="left:1416px;top:1465px;width:113.5px;background:#63b19e;letter-spacing:1.12px;">styled.<i>...</i></div><div class="b" style="left:1781.5px;top:1465px;width:2.0px;background:#37afa9;"></div><div class="b t" style="left:1891px;top:1465px;width:91px;background:#37afa9;letter-spacing:0.79px;">Field<i>...</i></div><div class="b" style="left:2048px;top:1465px;width:63.5px;background:#37afa9;"></div><div class="b h" style="left:2121.5px;top:1465px;width:22.0px;"></div><div class="b h" style="left:2197.5px;top:1465px;width:22.5px;"></div>
<div class="b t" style="left:1044px;top:1501px;width:272.5px;background:#37afa9;letter-spacing:0.78px;">CodeEditor (0.4ms o<i>...</i></div><div class="b t" style="left:1427px;top:1501px;width:102.5px;background:#37afa9;letter-spacing:0.92px;">Bluep<i>...</i></div><div class="b t" style="left:1895.5px;top:1501px;width:86.5px;background:#63b19e;letter-spacing:1.32px;">styl<i>...</i></div><div class="b" style="left:2048px;top:1501px;width:63.5px;background:#37afa9;"></div><div class="b h" style="left:2121.5px;top:1501px;width:22.0px;"></div><div class="b h" style="left:2201px;top:1501px;width:9px;"></div><div class="b h" style="left:2213px;top:1501px;width:5px;"></div>
<div class="b t" style="left:1050.5px;top:1537px;width:266.0px;background:#97b488;letter-spacing:0.88px;">styledComponents_<i>...</i></div><div class="b t" style="left:1429px;top:1537px;width:100.5px;background:#37afa9;letter-spacing:0.74px;">Mana<i>...</i></div><div class="b t" style="left:1907px;top:1537px;width:75px;background:#80b393;letter-spacing:1.32px;">styl<i>...</i></div><div class="b" style="left:2048px;top:1537px;width:63.5px;background:#37afa9;"></div><div class="b h" style="left:2121.5px;top:1537px;width:22.0px;"></div><div class="b h" style="left:2202px;top:1537px;width:2px;"></div>
<div class="b t" style="left:1108px;top:1573px;width:208.5px;background:#37afa9;letter-spacing:0.62px;">EvaluatedValue<i>...</i></div><div class="b t" style="left:1429px;top:1573px;width:100.5px;background:#37afa9;letter-spacing:0.99px;">Conte<i>...</i></div><div class="b" style="left:1950px;top:1573px;width:32px;background:#37afa9;"></div><div class="b" style="left:2048px;top:1573px;width:63.5px;background:#37afa9;"></div><div class="b h" style="left:2121.5px;top:1573px;width:22.0px;"></div>
<div class="b t" style="left:1109px;top:1609px;width:207.5px;background:#63b19e;letter-spacing:0.62px;">EvaluatedValue<i>...</i></div><div class="b t" style="left:1429px;top:1609px;width:100.5px;background:#37afa9;letter-spacing:0.99px;">Conte<i>...</i></div><div class="b" style="left:1955px;top:1609px;width:28px;background:#37afa9;"></div><div class="b" style="left:2048px;top:1609px;width:63.5px;background:#97b488;"></div><div class="b h" style="left:2121.5px;top:1609px;width:22.0px;"></div>
<div class="b t" style="left:1120.5px;top:1645px;width:196.0px;background:#febc38;letter-spacing:0.99px;">styledCompo<i>...</i></div><div class="b t" style="left:1429px;top:1645px;width:99px;background:#37afa9;letter-spacing:0.56px;">Refer<i>...</i></div><div class="b" style="left:1955px;top:1645px;width:28px;background:#37afa9;"></div><div class="b h" style="left:2121.5px;top:1645px;width:22.0px;"></div>
<div class="b" style="left:1294px;top:1681px;width:20px;background:#37afa9;"></div><div class="b t" style="left:1429px;top:1681px;width:99px;background:#37afa9;letter-spacing:1.20px;">Cont<i>...</i></div><div class="b" style="left:1955px;top:1681px;width:28px;background:#37afa9;"></div><div class="b h" style="left:2121.5px;top:1681px;width:22.0px;"></div>
<div class="b" style="left:1294px;top:1717px;width:20px;background:#63b19e;"></div><div class="b t" style="left:1429px;top:1717px;width:99px;background:#37afa9;letter-spacing:0.86px;">Inner<i>...</i></div><div class="b" style="left:1955px;top:1717px;width:28px;background:#37afa9;"></div><div class="b h" style="left:2121.5px;top:1717px;width:22.0px;"></div>
<div class="b" style="left:1305px;top:1753px;width:9px;background:#63b19e;"></div><div class="b t" style="left:1429px;top:1753px;width:99px;background:#37afa9;letter-spacing:0.92px;">Bluep<i>...</i></div><div class="b" style="left:1955px;top:1753px;width:28px;background:#37afa9;"></div><div class="b h" style="left:2121.5px;top:1753px;width:22.0px;"></div>
<div class="b t" style="left:1429px;top:1789px;width:99px;background:#37afa9;letter-spacing:1.23px;">style<i>...</i></div><div class="b" style="left:1955px;top:1789px;width:28px;background:#37afa9;"></div>
<div class="b" style="left:1430px;top:1825px;width:18.5px;background:#37afa9;"></div><div class="b t" style="left:1451px;top:1825px;width:77px;background:#37afa9;letter-spacing:1.49px;">Ico<i>...</i></div><div class="b" style="left:1955px;top:1825px;width:28px;background:#37afa9;"></div>
<div class="b" style="left:1430px;top:1861px;width:18.5px;background:#37afa9;"></div><div class="b t" style="left:1451px;top:1861px;width:77px;background:#abb67d;letter-spacing:1.49px;">Ico<i>...</i></div><div class="b" style="left:1955px;top:1861px;width:28px;background:#37afa9;"></div>
<div class="b" style="left:1439.5px;top:1897px;width:9.0px;background:#37afa9;"></div><div class="b" style="left:1955px;top:1897px;width:28px;background:#37afa9;"></div>
</div>
<div style="left:2300px;top:187px;width:2px;height:1727px;background:#eeeeee"></div>
<div class="tt" style="left:2319px;top:208px;letter-spacing:0.75px">Commit information</div>
<div class="rp bd" style="left:2319px;top:275.5px;letter-spacing:0.47px">Priority</div>
<div class="rp" style="left:2407.3px;top:275.5px">:</div><div class="rp m" style="left:2422.5px;top:276.0px">Immediate</div>
<div class="rp bd" style="left:2319px;top:319.5px;letter-spacing:0.76px">Committed at</div>
<div class="rp" style="left:2482.0px;top:319.5px">:</div><div class="rp m" style="left:2496px;top:320.0px">2.4s</div>
<div class="rp bd" style="left:2319px;top:364px;letter-spacing:0.44px">Durations</div>
<div style="left:2319px;top:400px;width:565px;height:115.5px;border-radius:8px;background:#e5e5e5"></div>
<div class="rp bd" style="left:2335px;top:407.5px;letter-spacing:0.27px">Render</div>
<div class="rp" style="left:2419.8px;top:407.5px">:</div><div class="rp m" style="left:2434px;top:408.0px">98.6ms</div>
<div class="rp bd" style="left:2335px;top:443.5px;letter-spacing:0.66px">Layout effects</div>
<div class="rp" style="left:2507.5px;top:443.5px">:</div><div class="rp m" style="left:2522px;top:444.0px">56.2ms</div>
<div class="rp bd" style="left:2335px;top:479.5px;letter-spacing:0.57px">Passive effects</div>
<div class="rp" style="left:2517.5px;top:479.5px">:</div><div class="rp m" style="left:2532px;top:480.0px">1.8ms</div>
<div class="rp bd" style="left:2319px;top:531.5px;letter-spacing:0.66px">What caused this update</div>
<div class="rp" style="left:2617px;top:531.5px">?</div>
<div class="li" style="top:567px">EntityName</div><div class="li" style="top:614px">EntityName</div><div class="li" style="top:661px">EntityName</div><div class="li" style="top:708px">EntityName</div><div class="li" style="top:755px">EntityName</div><div class="li" style="top:802px">ActionEntityContextMenu</div><div class="li" style="top:849px">EntityName</div><div class="li" style="top:896px">EntityName</div><div class="li" style="top:943px">PropertyPane</div><div class="li" style="top:990px">WidgetNameComponent</div><div class="li" style="top:1037px">PositionedContainer</div><div class="li" style="top:1084px">WidgetNameComponent</div><div class="li" style="top:1131px">PositionedContainer</div><div class="li" style="top:1178px">WidgetNameComponent</div><div class="li" style="top:1225px">PositionedContainer</div><div class="li" style="top:1272px">WidgetNameComponent</div><div class="li" style="top:1319px">PositionedContainer</div><div class="li" style="top:1366px">WidgetNameComponent</div><div class="li" style="top:1413px">PositionedContainer</div><div class="li" style="top:1460px">WidgetNameComponent</div><div class="li" style="top:1507px">PositionedContainer</div><div class="li" style="top:1554px">WidgetNameComponent</div><div class="li" style="top:1601px">PositionedContainer</div>
<div style="left:112px;top:1914px;width:2788px;height:16px;background:#ececec"></div>
<div class="atom" style="left:1675px;top:146px"></div><div class="atom" style="left:1891px;top:146px"></div><svg style="left:0;top:0" width="3012" height="2078" viewBox="0 0 3012 2078">
<!-- devtools tab bar icons -->
<g fill="#3f4348">
<g id="dots"><rect x="130.1" y="144.2" width="2.6" height="2.6"/><rect x="136.3" y="144.2" width="2.6" height="2.6"/><rect x="142.5" y="144.2" width="2.6" height="2.6"/><rect x="148.9" y="144.2" width="2.6" height="2.6"/><rect x="155.1" y="144.2" width="2.6" height="2.6"/>
<rect x="130.1" y="150.1" width="2.6" height="2.6"/><rect x="130.1" y="156.6" width="2.6" height="2.6"/><rect x="130.1" y="162.7" width="2.6" height="2.6"/><rect x="130.1" y="168.9" width="2.6" height="2.6"/>
<rect x="155.1" y="150.1" width="2.6" height="2.6"/><rect x="136.3" y="168.9" width="2.6" height="2.6"/></g>
<rect x="184.2" y="166.2" width="15.6" height="3.7"/>
<circle cx="2868" cy="149" r="3"/><circle cx="2868" cy="158.2" r="3"/><circle cx="2868" cy="167.3" r="3"/>
<circle cx="2811.5" cy="157.5" r="5.2"/>
</g>
<g fill="none" stroke="#3f4348" stroke-width="2.6">
<path d="M157.8,157.6H143.5V171.6M143.5,157.6L156.6,170.9"/>
<path d="M213.9,147.4H192.4A3,3 0 0 0 189.4,150.4V166.4"/>
<rect x="205.2" y="153.5" width="9.3" height="15.2" rx="1.8"/>
</g>
<g fill="none" stroke="#3f4348" stroke-width="2.2" stroke-linecap="round" stroke-linejoin="round">
<path d="M2211,148.1H2223.5M2214.3,148.1V156C2214.3,158 2213.5,159 2212,160.8L2207.3,166C2206.3,167.3 2207,168.3 2208.6,168.3H2225.6C2227.2,168.3 2227.9,167.3 2226.9,166L2222.2,160.8C2220.7,159 2219.9,158 2219.9,156V148.1"/>
</g>
<g transform="translate(2793.5,139.5) scale(1.5)" fill="#3f4348"><path d="M19.43 12.98c.04-.32.07-.64.07-.98 0-.34-.03-.66-.07-.98l2.11-1.65c.19-.15.24-.42.12-.64l-2-3.46c-.09-.16-.26-.25-.44-.25-.06 0-.12.01-.17.03l-2.49 1c-.52-.4-1.08-.73-1.69-.98l-.38-2.65C14.46 2.18 14.25 2 14 2h-4c-.25 0-.46.18-.49.42l-.38 2.65c-.61.25-1.17.59-1.69.98l-2.49-1c-.06-.02-.12-.03-.18-.03-.17 0-.34.09-.43.25l-2 3.46c-.13.22-.07.49.12.64l2.11 1.65c-.04.32-.07.65-.07.98 0 .33.03.66.07.98l-2.11 1.65c-.19.15-.24.42-.12.64l2 3.46c.09.16.26.25.44.25.06 0 .12-.01.17-.03l2.49-1c.52.4 1.08.73 1.69.98l.38 2.65c.03.24.24.42.49.42h4c.25 0 .46-.18.49-.42l.38-2.65c.61-.25 1.17-.59 1.69-.98l2.49 1c.06.02.12.03.18.03.17 0 .34-.09.43-.25l2-3.46c.12-.22.07-.49-.12-.64l-2.11-1.65zm-1.98-1.71c.04.31.05.52.05.73 0 .21-.02.43-.05.73l-.14 1.13.89.7 1.08.84-.7 1.21-1.27-.51-1.04-.42-.9.68c-.43.32-.84.56-1.25.73l-1.06.43-.16 1.13-.2 1.35h-1.4l-.19-1.35-.16-1.13-1.06-.43c-.43-.18-.83-.41-1.23-.71l-.91-.7-1.06.43-1.27.51-.7-1.21 1.08-.84.89-.7-.14-1.13c-.03-.31-.05-.54-.05-.74s.02-.43.05-.73l.14-1.13-.89-.7-1.08-.84.7-1.21 1.27.51 1.04.42.9-.68c.43-.32.84-.56 1.25-.73l1.06-.43.16-1.13.2-1.35h1.39l.19 1.35.16 1.13 1.06.43c.43.18.83.41 1.23.71l.91.7 1.06-.43 1.27-.51.7 1.21-1.07.85-.89.7.14 1.13z"/></g>
<!-- warnings -->
<g fill="#e66d33" stroke="#e66d33" stroke-width="2" stroke-linejoin="round">
<path d="M2652,149.3L2663,167.8H2641Z"/>
<path d="M702.8,149.3L713.8,167.8H691.8Z"/>
<path d="M2711.5,152.6H2728V165.2H2714.6L2711.5,168.4Z"/>
</g>
<g fill="#fff">
<rect x="2650.9" y="154.6" width="2.3" height="7.3"/><rect x="2650.9" y="163.6" width="2.3" height="2.3"/>
<rect x="701.6" y="154.6" width="2.3" height="7.3"/><rect x="701.6" y="163.6" width="2.3" height="2.3"/>
<rect x="2718.6" y="154.6" width="2.3" height="6"/><rect x="2718.6" y="162" width="2.3" height="2.2"/>
</g>
<g transform="translate(1675,146)">
<g fill="none" stroke="#f6c9ff" stroke-width="1.7"><ellipse cx="12.1" cy="12.2" rx="3" ry="8.7"/><ellipse cx="12.1" cy="12.2" rx="3" ry="8.7" transform="rotate(60 12.1 12.2)"/><ellipse cx="12.1" cy="12.2" rx="3" ry="8.7" transform="rotate(120 12.1 12.2)"/></g>
<circle cx="12.1" cy="12.2" r="1.8" fill="#b77fcb"/></g>
<g transform="translate(1891,146)">
<g fill="none" stroke="#f6c9ff" stroke-width="1.7"><ellipse cx="12.1" cy="12.2" rx="3" ry="8.7"/><ellipse cx="12.1" cy="12.2" rx="3" ry="8.7" transform="rotate(60 12.1 12.2)"/><ellipse cx="12.1" cy="12.2" rx="3" ry="8.7" transform="rotate(120 12.1 12.2)"/></g>
<circle cx="12.1" cy="12.2" r="1.8" fill="#b77fcb"/></g>
<!-- react devtools toolbar -->
<circle cx="144" cy="223" r="10.67" fill="#0088fa"/>
<g fill="#5f6673">
<g transform="translate(176,207) scale(1.3333)"><path d="M17.65 6.35C16.2 4.9 14.21 4 12 4c-4.42 0-7.99 3.58-7.99 8s3.57 8 7.99 8c3.73 0 6.84-2.55 7.73-6h-2.08c-.82 2.33-3.04 4-5.65 4-3.31 0-6-2.69-6-6s2.69-6 6-6c1.66 0 3.14.69 4.22 1.78L13 11h7V4l-2.35 2.35z"/></g>
<g transform="translate(224,207) scale(1.3333)"><path d="M12 2C6.48 2 2 6.48 2 12s4.48 10 10 10 10-4.48 10-10S17.52 2 12 2zM4 12c0-4.42 3.58-8 8-8 1.85 0 3.55.63 4.9 1.69L5.69 16.9C4.63 15.55 4 13.85 4 12zm8 8c-1.85 0-3.55-.63-4.9-1.69L18.31 7.1C19.37 8.45 20 10.15 20 12c0 4.42-3.58 8-8 8z"/></g>
<g transform="translate(290,207) scale(1.3333)"><path d="M8.18,18.13v-7H3l9-9,9,9H15.82v7ZM3,20.13H21v1.73H3Z"/></g>
<g transform="translate(338,207) scale(1.3333)"><path d="M15.82,2.14v7H21l-9,9L3,9.18H8.18v-7ZM3,20.13H21v1.73H3Z"/></g>
<g transform="translate(1668,207) scale(1.3333)"><path d="M19.43 12.98c.04-.32.07-.64.07-.98s-.03-.66-.07-.98l2.11-1.65c.19-.15.24-.42.12-.64l-2-3.46c-.12-.22-.39-.3-.61-.22l-2.49 1c-.52-.4-1.08-.73-1.69-.98l-.38-2.65C14.46 2.18 14.25 2 14 2h-4c-.25 0-.46.18-.49.42l-.38 2.65c-.61.25-1.17.59-1.69.98l-2.49-1c-.23-.09-.49 0-.61.22l-2 3.46c-.13.22-.07.49.12.64l2.11 1.65c-.04.32-.07.65-.07.98s.03.66.07.98l-2.11 1.65c-.19.15-.24.42-.12.64l2 3.46c.12.22.39.3.61.22l2.49-1c.52.4 1.08.73 1.69.98l.38 2.65c.03.24.24.42.49.42h4c.25 0 .46-.18.49-.42l.38-2.65c.61-.25 1.17-.59 1.69-.98l2.49 1c.23.09.49 0 .61-.22l2-3.46c.12-.22.07-.49-.12-.64l-2.11-1.65zM12 15.5c-1.93 0-3.5-1.57-3.5-3.5s1.57-3.5 3.5-3.5 3.5 1.57 3.5 3.5-1.57 3.5-3.5 3.5z"/></g>
<g transform="translate(1879,207) scale(1.3333)"><path d="M20 11H7.83l5.59-5.59L12 4l-8 8 8 8 1.41-1.41L7.83 13H20v-2z"/></g>
<g transform="translate(2251.7,207) scale(1.3333)"><path d="M12 4l-1.41 1.41L16.17 11H4v2h12.17l-5.58 5.59L12 20l8-8z"/></g>
</g>
<g fill="#0088fa">
<path fill-rule="evenodd" d="M424.2,210C427.5,211 432,215 435.1,219.3C436.5,221.5 437,223.5 436.9,225.6C436.9,228 436.5,229.8 435.6,231.3C434.8,233 433.5,234.5 431.8,235.3C431.5,232 430,229 428.05,227.1C426,229 424.6,232 424.3,235.3C422.5,234.5 421,232.8 420,230.6C419.2,229 418.7,227 418.8,225.1C418.9,223.3 419.2,221.9 419.8,220.5C420.4,219.2 421.1,218.2 422,217.3C422.2,218.5 422.8,219.7 423.5,220.5C424,221 424.6,221.3 425.3,221.2C426.3,221 426.9,219.8 427,218.5C427.1,217.3 426.9,216.2 426.5,215C426,213.3 425.2,211.6 424.2,210Z"/>
<path d="M427.8,230.2C428.6,231.3 429.6,232.2 429.6,233.2A1.8,1.8 0 0 1 426,233.2C426,232.2 427,231.3 427.8,230.2Z"/>
<g transform="translate(624.5,207.3) scale(1.3333)"><path d="M3 5h18v3H3zM3 10.5h13v3H3zM3 16h8v3H3z"/></g>
<g transform="translate(807,207) scale(1.3333)"><path d="M19 3h-1V1h-2v2H8V1H6v2H5c-1.11 0-1.99.9-1.99 2L3 19c0 1.1.89 2 2 2h14c1.1 0 2-.9 2-2V5c0-1.1-.9-2-2-2zm0 16H5V9h14v10zm0-12H5V5h14v2zM7 11h5v5H7z"/></g>
</g>
<path d="M1333.5,219.5L1341.7,227.7L1350,219.5" fill="none" stroke="#222" stroke-width="2.2"/>
</svg>
</div></div></div>
</body></html>
